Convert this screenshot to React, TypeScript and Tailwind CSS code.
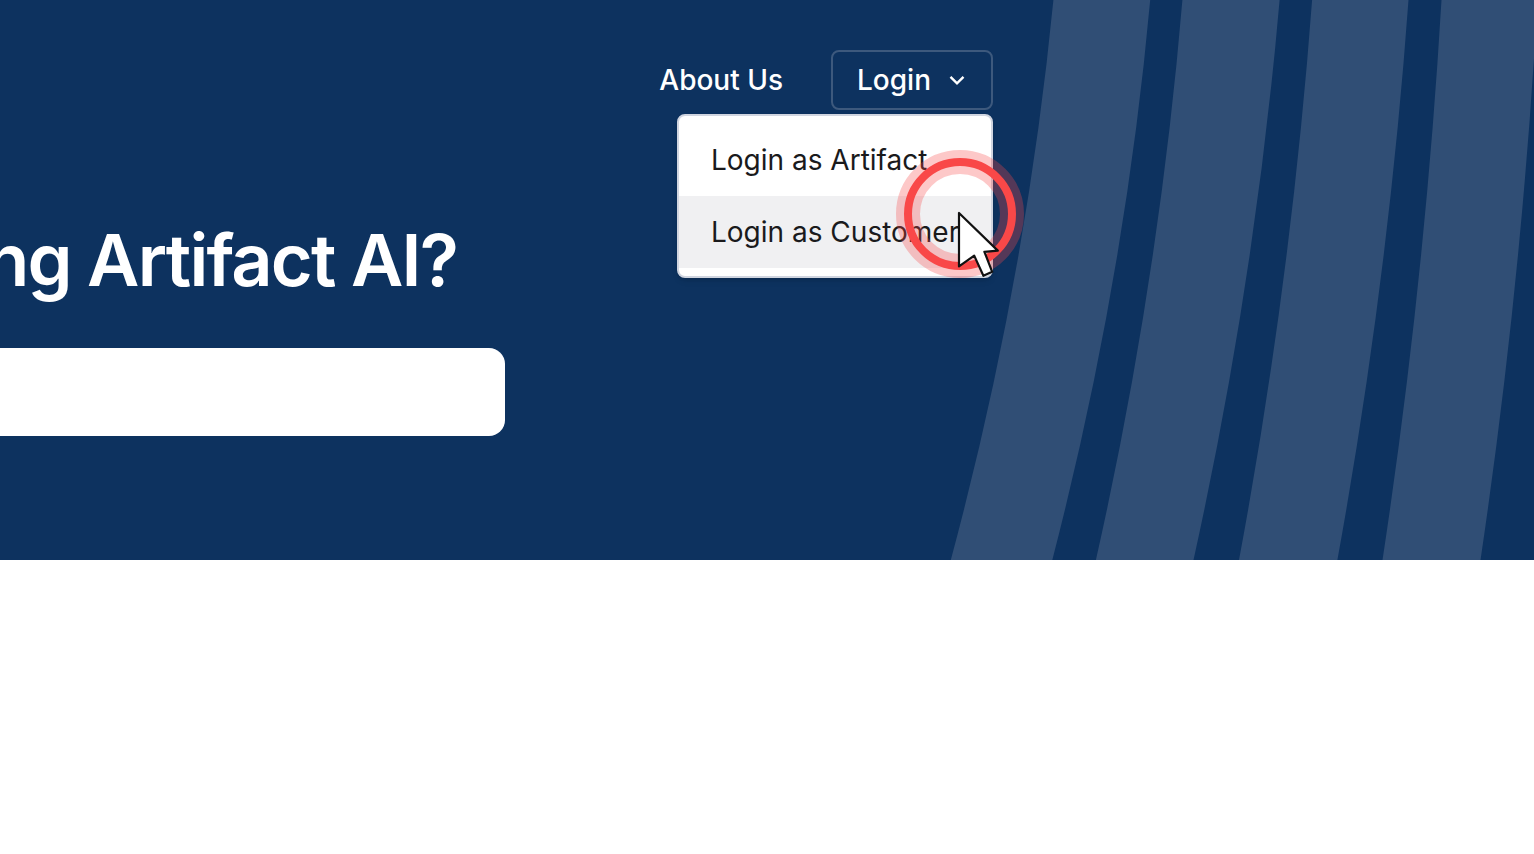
const loginOptions = ["Login as Artifact", "Login as Customer"];

function Stripes() {
  return (
    <svg
      aria-hidden="true"
      viewBox="0 0 600 560"
      className="pointer-events-none absolute top-0 left-[934px] h-[560px] w-[600px]"
      fill="#304e75"
    >
      <path d="M119.4 0Q92 280 16.8 560H118.3Q190.8 280 216.2 0Z" />
      <path d="M248.4 0Q224.9 280 161.9 560H259.5Q321.3 280 345.6 0Z" />
      <path d="M378.1 0Q357.2 280 305 560H403.4Q454.2 280 474.5 0Z" />
      <path d="M507.5 0Q491 280 448.5 560H546.5Q588 280 603.5 0Z" />
    </svg>
  );
}

function ChevronDown() {
  return (
    <svg aria-hidden="true" viewBox="0 0 20 20" className="size-5" fill="none">
      <path d="M3.5 6.8 10 13.3 16.5 6.8" stroke="white" strokeWidth="2.4" />
    </svg>
  );
}

function ClickMarker() {
  return (
    <svg
      aria-hidden="true"
      viewBox="0 0 128 128"
      className="pointer-events-none absolute top-[100px] left-[65px] size-32"
    >
      <circle cx="64" cy="64" r="52" fill="none" stroke="#f94848" strokeOpacity="0.3" strokeWidth="24" />
      <circle cx="64" cy="64" r="52" fill="none" stroke="#f94848" strokeWidth="8" />
      <path
        d="M63 63V116.4L78.2 105.6L87.4 125.8L96.2 121.8L88.4 101.8L101.8 100.6Z"
        fill="white"
        stroke="#111"
        strokeWidth="2.2"
        strokeLinejoin="round"
      />
    </svg>
  );
}

function LoginMenu() {
  return (
    <div className="relative">
      <button
        type="button"
        aria-haspopup="menu"
        aria-expanded="true"
        className="flex h-[60px] w-[162px] items-center justify-between rounded-lg border-2 border-[#3d597d] px-6 text-[28px] font-medium text-white"
      >
        Login
        <ChevronDown />
      </button>
      <div
        role="menu"
        className="absolute top-16 right-0 w-[316px] rounded-lg border-2 border-[#d0d5e0] bg-white py-2 shadow-md"
      >
        {loginOptions.map((option) => (
          <a
            key={option}
            href="#"
            role="menuitem"
            className="flex h-[72px] items-center px-8 text-[28px] whitespace-nowrap text-[#1a1a1c] last:bg-[#f0f0f2]"
          >
            {option}
          </a>
        ))}
      </div>
      <ClickMarker />
    </div>
  );
}

export default function App() {
  return (
    <div className="min-h-screen overflow-x-hidden bg-white font-[Inter,sans-serif]">
      <section className="relative h-[560px] overflow-hidden bg-[#0d325f]">
        <Stripes />
        <header className="relative z-10 max-w-[993px] pt-[50px]">
          <nav className="flex items-center justify-end gap-12">
            <a href="#" className="text-[28px] font-medium text-white">
              About Us
            </a>
            <LoginMenu />
          </nav>
        </header>
        <div className="mt-[106px] w-[505px]">
          <h1 className="flex h-[88px] items-center justify-end pr-12 text-[72px] font-semibold tracking-tight whitespace-nowrap text-white">
            ng Artifact AI?
          </h1>
          <input
            type="search"
            aria-label="Search"
            className="mt-11 h-[88px] w-full rounded-r-2xl bg-white px-6 text-[28px] outline-none"
          />
        </div>
      </section>
    </div>
  );
}
